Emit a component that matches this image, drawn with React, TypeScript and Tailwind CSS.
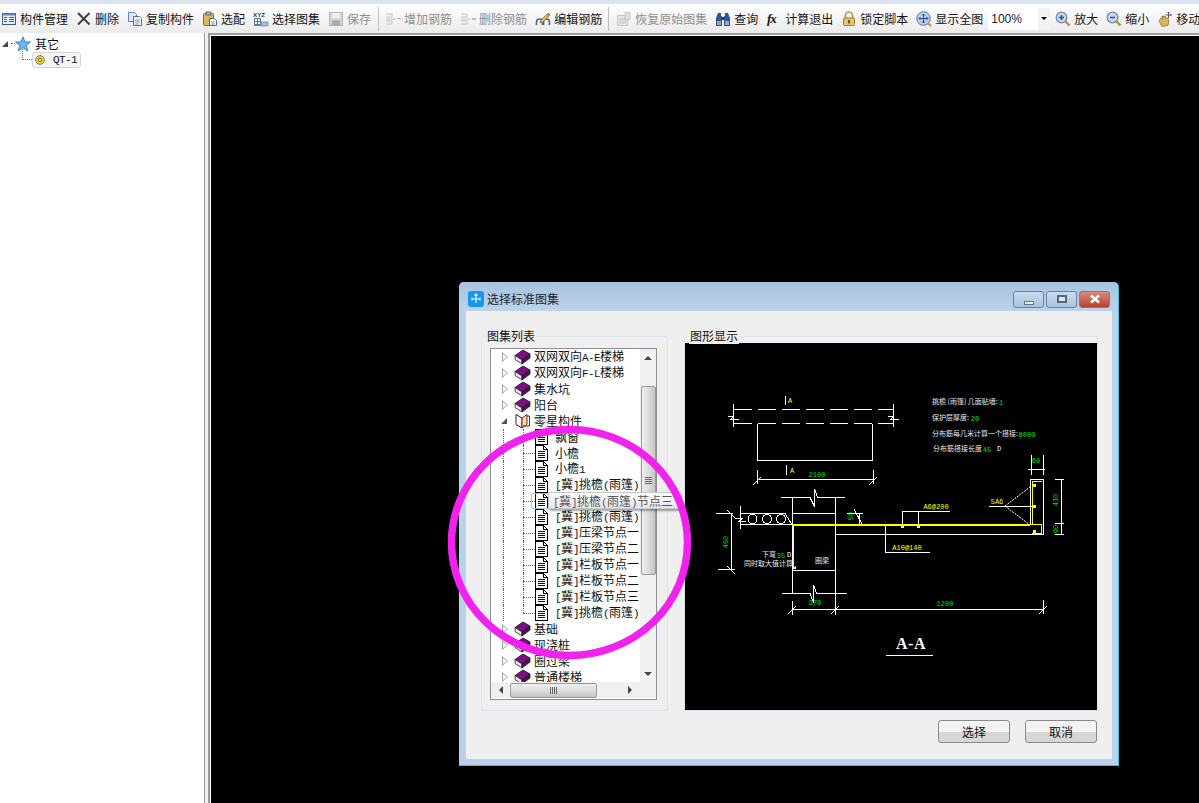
import React from "react";

const CJK = "font-['Noto_Sans_CJK_SC','Noto_Sans_CJK_JP',sans-serif]";

function Zh({ t }: { t: string }) {
  const parts = t.split(/([\x00-\x7f]+)/).filter(Boolean);
  return (
    <>
      {parts.map((p, i) =>
        /^[\x00-\x7f]/.test(p) ? (
          <span key={i} className="font-['Liberation_Mono',monospace] text-[11px] tracking-[-0.6px] whitespace-pre">
            {p}
          </span>
        ) : (
          <span key={i}>{p}</span>
        )
      )}
    </>
  );
}

const S = ({ children, cls = "" }: { children: React.ReactNode; cls?: string }) => (
  <svg viewBox="0 0 16 16" className={"w-4 h-4 shrink-0 " + cls}>
    {children}
  </svg>
);

const icons: Record<string, React.ReactNode> = {
  manage: (
    <S>
      <rect x="1.5" y="2.5" width="13" height="11" fill="#e6eef8" stroke="#3a5f95" />
      <rect x="1.5" y="2.5" width="13" height="2" fill="#5f86bd" />
      <rect x="3" y="6" width="3" height="1" fill="#3a5f95" />
      <rect x="3" y="8" width="3" height="1" fill="#3a5f95" />
      <rect x="3" y="10" width="3" height="1" fill="#3a5f95" />
      <rect x="8" y="6" width="5" height="1" fill="#3a5f95" />
      <rect x="8" y="8" width="5" height="1" fill="#3a5f95" />
      <rect x="8" y="10" width="5" height="1" fill="#3a5f95" />
    </S>
  ),
  del: (
    <S>
      <path d="M2 2 L13.500 13.500 M13.500 2 L2 13.500" stroke="#3c3c3c" strokeWidth="1.900" />
    </S>
  ),
  copy: (
    <S>
      <path d="M1.5 1.5h6l2 2v7h-8z" fill="#dce8f6" stroke="#5d83b8" />
      <path d="M6.5 5.5h6l2 2v7h-8z" fill="#fff" stroke="#4b74ad" />
      <path d="M8 9h5M8 11h5M8 13h4" stroke="#6b90c2" />
    </S>
  ),
  paste: (
    <S>
      <rect x="1.5" y="2.5" width="10" height="12" rx="1" fill="#dcb75c" stroke="#8d6a22" />
      <rect x="4" y="1" width="5" height="3" fill="#b5b5b5" stroke="#6d6d6d" />
      <path d="M7.5 7.5h5l2 2v5h-7z" fill="#fff" stroke="#4f6c96" />
      <path d="M9 11h4M9 13h4" stroke="#7c93b5" />
    </S>
  ),
  xyz: (
    <S>
      <text x="0" y="5.5" fontSize="6.200" fontWeight="700" fontFamily="Liberation Sans" fill="#27364f">
        XYZ
      </text>
      <rect x="1" y="7" width="7" height="8" fill="#5d7bab" />
      <rect x="2" y="8" width="2" height="2" fill="#fff" />
      <rect x="5" y="8" width="2" height="2" fill="#fff" />
      <rect x="2" y="11" width="2" height="2" fill="#fff" />
      <rect x="5" y="11" width="2" height="2" fill="#fff" />
      <rect x="8" y="11" width="7" height="4" fill="#a8bbd6" stroke="#5d7bab" strokeWidth=".6" />
    </S>
  ),
  save: (
    <S>
      <rect x="1.5" y="1.5" width="13" height="13" fill="#d4d4d4" stroke="#b4b4b4" />
      <rect x="4" y="2" width="8" height="5" fill="#efefef" />
      <rect x="4" y="9.5" width="8" height="5" fill="#a9a9a9" />
    </S>
  ),
  add: (
    <S>
      <path d="M1 3h6v3H1M1 13h6v-3H1M1 8h10" stroke="#c4c4c4" fill="none" />
      <path d="M12 7.500h4" stroke="#a9a9a9" />
    </S>
  ),
  rem: (
    <S>
      <path d="M1 3h6v3H1M1 13h6v-3H1M1 8h10" stroke="#c4c4c4" fill="none" />
      <path d="M12 8h4" stroke="#a9a9a9" strokeWidth="1.400" />
    </S>
  ),
  edit: (
    <S>
      <path d="M1.5 14v-3a3 3 0 0 1 6 0v3M8.5 14v-3a3 3 0 0 1 6 0v3" stroke="#3c66a8" strokeWidth="1.600" fill="none" />
      <path d="M6 9 13 2l2 2-7 7-3 1z" fill="#e5b04c" stroke="#8c6720" strokeWidth=".7" />
      <path d="M13 2l2 2-1 1-2-2z" fill="#d2665a" />
    </S>
  ),
  restore: (
    <S>
      <rect x="1.5" y="4.5" width="10" height="10" fill="#e6e6e6" stroke="#c6c6c6" />
      <path d="M9 1.5h5v7H9z" fill="#dedede" stroke="#c9c9c9" />
      <path d="M3 8h7M3 10h7M3 12h7" stroke="#c6c6c6" />
    </S>
  ),
  find: (
    <S>
      <path d="M3 2h3v3h1v10H1V7z" fill="#33568f" />
      <path d="M13 2h-3v3H9v10h6V7z" fill="#33568f" />
      <rect x="2" y="10" width="4" height="4" fill="#8aa7d3" />
      <rect x="10" y="10" width="4" height="4" fill="#8aa7d3" />
      <rect x="7" y="6" width="2" height="3" fill="#1f3558" />
    </S>
  ),
  fx: (
    <S>
      <text x="1" y="12" fontSize="13" fontStyle="italic" fontWeight="700" fontFamily="Liberation Serif" fill="#111" letterSpacing="-1">
        fx
      </text>
    </S>
  ),
  lock: (
    <S>
      <path d="M4.5 7V4.500a3.500 3.500 0 0 1 7 0V7" stroke="#b9954d" strokeWidth="1.600" fill="none" />
      <rect x="2.5" y="7" width="11" height="7.500" rx="1" fill="#e9c46e" stroke="#a17a2c" />
      <rect x="7" y="9" width="2" height="3.500" fill="#7d5a15" />
    </S>
  ),
  fit: (
    <S>
      <circle cx="7.5" cy="7.5" r="6.800" fill="#b9cfea" stroke="#567aa9" />
      <path d="M7.500 3v9M3 7.500h9M6 4.500l1.500-1.500L9 4.500M6 10.500 7.500 12 9 10.500M4.500 6 3 7.500 4.500 9M10.500 6 12 7.500 10.500 9" stroke="#2e4f80" fill="none" />
      <path d="M12.500 12.500l2.500 2.500" stroke="#c98d2b" strokeWidth="2" />
    </S>
  ),
  zin: (
    <S>
      <circle cx="6.500" cy="6.500" r="5.300" fill="#c5d8ee" stroke="#6d89ad" strokeWidth="1.300" />
      <path d="M4 6.500h5M6.500 4v5" stroke="#2c5288" strokeWidth="1.500" />
      <path d="M10.500 10.500l4 4" stroke="#b98d3d" strokeWidth="2.400" />
    </S>
  ),
  zout: (
    <S>
      <circle cx="6.500" cy="6.500" r="5.300" fill="#c5d8ee" stroke="#6d89ad" strokeWidth="1.300" />
      <path d="M4 6.500h5" stroke="#2c5288" strokeWidth="1.500" />
      <path d="M10.500 10.500l4 4" stroke="#b98d3d" strokeWidth="2.400" />
    </S>
  ),
  move: (
    <S>
      <path d="M2 10 4 7l1 1V5l1.500 2V4.500L8 7V5l1.500 2.500L11 7l1 3-1 4.500-6 1z" fill="#dcb25c" stroke="#8f6f30" strokeWidth=".7" />
      <path d="M11.500 1v6M8.500 4h6M10.500 2 11.500 1l1 1M13.500 3l1 1-1 1" stroke="#3e4c5e" fill="none" strokeWidth=".9" />
    </S>
  ),
};

const tools: (
  | { i: string; t: string; off?: boolean }
  | { sep: string }
  | { combo: true }
)[] = [
  { i: "manage", t: "构件管理" },
  { i: "del", t: "删除" },
  { i: "copy", t: "复制构件" },
  { i: "paste", t: "选配" },
  { i: "xyz", t: "选择图集" },
  { i: "save", t: "保存", off: true },
  { sep: "-ml-px -mr-[2px]" },
  { i: "add", t: "增加钢筋", off: true },
  { i: "rem", t: "删除钢筋", off: true },
  { i: "edit", t: "编辑钢筋" },
  { sep: "-ml-[2px] -mr-px" },
  { i: "restore", t: "恢复原始图集", off: true },
  { i: "find", t: "查询" },
  { i: "fx", t: "计算退出" },
  { i: "lock", t: "锁定脚本" },
  { i: "fit", t: "显示全图" },
  { combo: true },
  { i: "zin", t: "放大" },
  { i: "zout", t: "缩小" },
  { i: "move", t: "移动" },
];

function Toolbar() {
  return (
    <div className="h-[29px] flex items-center gap-2 pl-px whitespace-nowrap overflow-hidden bg-gradient-to-b from-[#ffffff] to-[#ebebeb]">
      {tools.map((x, k) => {
        if ("sep" in x) return <div key={k} className={"w-px h-6 bg-[#c0c0c0] shrink-0 " + x.sep} />;
        if ("combo" in x)
          return (
            <div key={k} className="-mx-[3px] w-[62px] h-[22px] bg-white flex items-center shrink-0">
              <span className="ml-[3px] flex-1 text-[12px] text-[#222] font-['Liberation_Sans',sans-serif]">100%</span>
              <span className="w-[12px] h-full bg-[#f2f2f2] flex items-center justify-center">
                <span className="w-0 h-0 border-x-[3px] border-x-transparent border-t-[3px] border-t-black" />
              </span>
            </div>
          );
        return (
          <div key={k} className="flex items-center gap-[3px] shrink-0">
            {icons[x.i]}
            <span className={"text-[12px] leading-4 " + (x.off ? "text-[#8f8f8f]" : "text-[#151515]")}>{x.t}</span>
          </div>
        );
      })}
    </div>
  );
}

function LeftTree() {
  return (
    <div className="w-[204px] shrink-0 bg-white relative border-r border-[#9a9a9a] box-content">
      <div className="h-[17px] mt-[2px] flex items-center">
        <span className="ml-[2px] w-0 h-0 border-l-[6px] border-l-transparent border-b-[6px] border-b-[#444]" />
        <span className="ml-[3px] w-[4px] border-t border-dotted border-[#777]" />
        <svg viewBox="0 0 16 16" className="w-4 h-4">
          <path d="M8 .8 10 6h5.500l-4.400 3.400L12.800 15 8 11.700 3.200 15l1.700-5.600L.5 6H6z" fill="#6fb7ee" stroke="#2b7fc6" strokeWidth=".9" />
        </svg>
        <span className="ml-[4px] text-[12px] text-[#111]">其它</span>
      </div>
      <div className="h-4 flex items-center relative">
        <span className="absolute left-[22px] -top-[3px] h-[11px] w-[10px] border-l border-b border-dotted border-[#777]" />
        <div className="ml-[32px] w-[49px] h-4 border border-[#d4d4d4] rounded-[3px] bg-[#f5f5f5] flex items-center">
          <svg viewBox="0 0 12 12" className="ml-[1px] w-3 h-3">
            <circle cx="6" cy="6" r="4.300" fill="#f0e020" stroke="#333" strokeWidth="1" strokeDasharray="1.300 .7" />
            <circle cx="6" cy="6" r="1.600" fill="#fff" stroke="#333" strokeWidth=".8" />
          </svg>
          <span className="ml-[7px] text-[11px] tracking-[-0.6px] font-['Liberation_Mono',monospace] text-[#111]">QT-1</span>
        </div>
      </div>
    </div>
  );
}

const Book = () => (
  <svg viewBox="0 0 17 16" className="w-[17px] h-4 shrink-0">
    <path d="M1 6.500 9 1l7 4-8 6z" fill="#7d0f80" stroke="#2a0530" strokeWidth=".8" />
    <path d="M1 6.500 8 11v4L1 10.500z" fill="#e8e8e8" stroke="#222" strokeWidth=".8" />
    <path d="M8 11l8-6v4l-8 6z" fill="#4b1050" stroke="#222" strokeWidth=".8" />
  </svg>
);
const OpenBook = () => (
  <svg viewBox="0 0 17 16" className="w-[17px] h-4 shrink-0">
    <path d="M2 1.500 8 5v10l-6-3.500z" fill="#fff" stroke="#3a1050" />
    <path d="M8 5l5-3.500v10L8 15z" fill="#f2e46c" stroke="#6a2080" />
    <path d="M13 3h2.500v10H9" fill="none" stroke="#7d0f80" />
  </svg>
);
const Doc = () => (
  <svg viewBox="0 0 13 16" className="w-[13px] h-4 shrink-0" shapeRendering="crispEdges">
    <path d="M.5 .5h8l4 4v11H.5z" fill="#fff" stroke="#000" />
    <path d="M8.500 .5v4h4" fill="none" stroke="#000" />
    <path d="M3 6.500h7M3 8.500h7M3 10.500h7M3 12.500h7" stroke="#00008b" />
  </svg>
);

const Tri = () => (
  <span className="relative w-[6px] h-[10px] shrink-0 ml-[11px] flex items-center">
    <span className="w-0 h-0 border-y-[5px] border-y-transparent border-l-[6px] border-l-[#a0a0a0]" />
    <span className="absolute left-px top-[2px] w-0 h-0 border-y-[3px] border-y-transparent border-l-[4px] border-l-white" />
  </span>
);

function L1({ t }: { t: string }) {
  return (
    <div className="h-4 flex items-center shrink-0">
      <Tri />
      <span className="ml-[6px] flex shrink-0">
        <Book />
      </span>
      <span className="ml-[3px] text-[12px] leading-4 text-[#111] whitespace-nowrap">
        <Zh t={t} />
      </span>
    </div>
  );
}

function L2({ t, sel, last }: { t: string; sel?: boolean; last?: boolean }) {
  return (
    <div className="h-4 flex items-center shrink-0 relative">
      <span className="absolute left-[12px] top-0 h-4 border-l border-dotted border-[#666]" />
      <span className={"absolute left-[32px] top-0 border-l border-dotted border-[#666] " + (last ? "h-2" : "h-4")} />
      <span className="ml-[32px] w-[12px] shrink-0 border-t border-dotted border-[#666]" />
      <Doc />
      {!sel && (
        <span className="ml-[7px] text-[12px] leading-4 text-[#111] whitespace-nowrap">
          <Zh t={t} />
        </span>
      )}
      {sel && <span className="absolute left-[40px] top-0 w-[18px] h-4 border border-[#9cc3e8] rounded-[2px]" />}
    </div>
  );
}

function TreeList() {
  const top = ["双网双向A-E楼梯", "双网双向F-L楼梯", "集水坑", "阳台"];
  const kids = [
    "飘窗",
    "小檐",
    "小檐1",
    "[冀]挑檐(雨篷)",
    "[冀]挑檐(雨篷)节点三",
    "[冀]挑檐(雨篷)",
    "[冀]压梁节点一",
    "[冀]压梁节点二",
    "[冀]栏板节点一",
    "[冀]栏板节点二",
    "[冀]栏板节点三",
    "[冀]挑檐(雨篷)",
  ];
  const rest = ["基础", "现浇桩", "圈过梁", "普通楼梯"];
  return (
    <div className="flex-1 min-w-0 h-[333px] overflow-hidden flex flex-col">
      {top.map((t) => (
        <L1 key={t} t={t} />
      ))}
      <div className="h-4 flex items-center shrink-0">
        <span className="ml-[10px] w-0 h-0 border-l-[6px] border-l-transparent border-b-[6px] border-b-[#555]" />
        <span className="ml-[7px] flex">
          <OpenBook />
        </span>
        <span className="ml-[3px] text-[12px] leading-4 text-[#111]">零星构件</span>
      </div>
      {kids.map((t, i) => (
        <L2 key={i} t={t} sel={i === 4} last={i === kids.length - 1} />
      ))}
      {rest.map((t) => (
        <L1 key={t} t={t} />
      ))}
    </div>
  );
}

function VScroll() {
  return (
    <div className="w-[16px] h-[333px] bg-[#f0f0f0] flex flex-col items-center shrink-0">
      <div className="h-[18px] flex items-center justify-center">
        <span className="w-0 h-0 border-x-[4px] border-x-transparent border-b-[4px] border-b-[#444]" />
      </div>
      <div className="h-[19px] shrink-0" />
      <div className="w-[15px] h-[189px] border border-[#9a9a9a] rounded-[2px] bg-gradient-to-r from-[#eeeeee] via-[#dddddd] to-[#c4c4c4] flex flex-col items-center justify-center gap-px">
        <span className="w-[7px] h-px bg-[#666]" />
        <span className="w-[7px] h-px bg-[#666]" />
        <span className="w-[7px] h-px bg-[#666]" />
        <span className="w-[7px] h-px bg-[#666]" />
      </div>
      <div className="flex-1" />
      <div className="h-[16px] flex items-center justify-center">
        <span className="w-0 h-0 border-x-[4px] border-x-transparent border-t-[4px] border-t-[#444]" />
      </div>
    </div>
  );
}

function HScroll() {
  return (
    <div className="h-[16px] bg-[#f0f0f0] flex items-center">
      <div className="w-[19px] flex items-center justify-center">
        <span className="w-0 h-0 border-y-[4px] border-y-transparent border-r-[4px] border-r-[#444]" />
      </div>
      <div className="w-[87px] h-[15px] border border-[#9a9a9a] rounded-[2px] bg-gradient-to-b from-[#eeeeee] via-[#dddddd] to-[#c4c4c4] flex items-center justify-center gap-px">
        <span className="w-px h-[7px] bg-[#666]" />
        <span className="w-px h-[7px] bg-[#666]" />
        <span className="w-px h-[7px] bg-[#666]" />
        <span className="w-px h-[7px] bg-[#666]" />
      </div>
      <div className="flex-1" />
      <div className="w-[16px] flex items-center justify-center">
        <span className="w-0 h-0 border-y-[4px] border-y-transparent border-l-[4px] border-l-[#444]" />
      </div>
      <div className="w-[18px]" />
    </div>
  );
}

const W = "#ffffff";
const Y = "#ffff00";
const G = "#00e000";

function Drawing() {
  const dash = [733, 757, 781, 805, 829, 853, 877];
  const tx = "Noto Sans CJK SC";
  const small = (x: number, y: number, s: string, c = "#e8e8f0") => (
    <text x={x} y={y} fontSize="7" fill={c} fontFamily={tx}>
      {s}
    </text>
  );
  const num = (x: number, y: number, s: string, c = G, rot?: boolean) => (
    <text
      x={x}
      y={y}
      fontSize="7"
      fill={c}
      fontFamily="Liberation Mono"
      textAnchor="middle"
      transform={rot ? `rotate(-90 ${x} ${y})` : undefined}
    >
      {s}
    </text>
  );
  const slash = (x: number, y: number) => <path d={`M${x - 4} ${y + 4}L${x + 4} ${y - 4}`} />;
  const back = (x: number, y: number) => <path d={`M${x - 4} ${y - 4}L${x + 4} ${y + 4}`} />;
  return (
    <svg viewBox="685 343 412 367" className="w-[412px] h-[367px] block">
      <g stroke={W} fill="none" strokeWidth="1" shapeRendering="crispEdges">
        {dash.map((x) => (
          <path key={x} d={`M${x + 0.5} 409.500h${x === 877 ? 16 : 18}M${x + 0.5} 423.500h${x === 877 ? 16 : 18}`} />
        ))}
        <path d="M733.500 404v23M893.500 404v23M785.500 396v9M786.500 465v10" />
        <path d="M728 416h6l-3 3h8M888 416h6l-3 3h8" />
        <path d="M757.500 423.500V460.500H872.500V423.500" />
        <path d="M757.500 470v14M873.500 470v14M757 479.500h116" />
        {slash(757, 481)}
        {slash(873, 481)}
        <path d="M781 497.500h29l4.500 9V489l3 8.500h27.500M792.500 497v96M835.500 497v113M782 593.500h28l3.500 9V585l3 8.500h30" />
        <path d="M792 513.500h43M792 570.500h43" />
        <path d="M741 513.500h44l7 11M740.500 506v23M741 524.500h51" />
        <circle cx="752.500" cy="519" r="4.500" />
        <circle cx="767" cy="519" r="4.500" />
        <circle cx="781" cy="519" r="4.500" />
        <path d="M735 518.500h7l-3 3h7" />
        <path d="M731.500 513v56M716 513.500h17M718 569.500h17" />
        {back(731, 514)}
        {back(731, 570)}
        <path d="M847 513.500h16M859.500 513v11M854 509l9 17" />
        <path d="M835 534.500h208.500M885.500 524v28M885 552.500h45M902.500 511.500v13M918.500 511.500v13M902 511.500h48" />
        <path d="M989 506.500h45M1030.500 479.500v45M1030 479.500h13.500v55" />
        <path d="M1005 506 1030 487M1005 506 1030 525" strokeDasharray="2 1" shapeRendering="auto" />
        <path d="M1031.500 455v20M1043.500 455v20M1028 469.500h17" />
        <path d="M1061.500 479v56M1055 479.500h9M1055 523.500h9M1055 534.500h9" />
        <path d="M792.500 601v14M835.500 601v14M1043.500 600v14M792 609.500h251" />
        {slash(792, 610)}
        {slash(835, 610)}
        {slash(1043, 610)}
        <path d="M886 655.500h47" />
      </g>
      <g stroke={Y} fill="none" shapeRendering="crispEdges">
        <path d="M792 524.500h238" strokeWidth="2" />
        <path d="M793.500 524v44" strokeWidth="1.500" />
        <path d="M792.500 568h3v-2" strokeWidth="1.500" />
        <path d="M1032.500 524V481" strokeWidth="1.500" />
        <path d="M1032 481.500h10M1030 524.500h11v8.500h-9" />
        <path d="M902 525v3M918 525v3M1034 505v3M1034 484v3M1034 530v3" strokeWidth="3" />
      </g>
      {small(932, 404, "挑檐 (雨篷) 几面贴墙:")}
      {num(1001, 405, "1")}
      {small(932, 420, "保护层厚度:")}
      {num(975, 421, "20")}
      {small(932, 436, "分布筋每几米计算一个搭接:")}
      {num(1027, 437, "8000")}
      {small(933, 451, "分布筋搭接长度")}
      {num(987, 452, "45")}
      {num(999, 451, "D", "#ffffff")}
      {small(762, 557, "下弯")}
      {num(781, 558, "35")}
      {num(789, 557, "D", "#ffffff")}
      {small(744, 566, "同时取大值计算")}
      {small(815, 563, "圈梁")}
      {num(790, 403, "A", Y)}
      {num(792, 473, "A", Y)}
      {num(817, 477, "2100")}
      {num(853, 516, "50", G, true)}
      {num(728, 542, "450", G, true)}
      {num(815, 605, "370")}
      {num(945, 606, "1200")}
      {num(936, 509, "A6@200", Y)}
      {num(907, 550, "A10@140", Y)}
      {num(997, 504, "5A6", Y)}
      {num(1036, 463, "60")}
      {num(1058, 500, "410", G, true)}
      {num(1058, 529, "90", G, true)}
      <text x="911" y="649" fontSize="16" fontWeight="700" fill="#fff" textAnchor="middle" letterSpacing=".5" fontFamily="Liberation Serif">
        A-A
      </text>
    </svg>
  );
}

function Group({ label, w, children }: { label: string; w: string; children: React.ReactNode }) {
  return (
    <div className={"relative h-[375px] border border-[#dce4ee] rounded-[2px] " + w}>
      <span className="absolute left-[4px] -top-[9px] bg-[#efefef] px-px text-[12px] leading-4 text-[#111]">{label}</span>
      {children}
    </div>
  );
}

function WinBtn({ w, cls, children }: { w: string; cls: string; children: React.ReactNode }) {
  return (
    <div className={"h-[17px] rounded-[3px] border border-[#6f8198] flex items-center justify-center " + w + " " + cls}>{children}</div>
  );
}

function Dialog() {
  return (
    <div className="absolute left-[459px] top-[282px] w-[660px] h-[484px] bg-[#b9d1ea] border-r border-b border-[#38c5e0] rounded-t-[5px] flex flex-col">
      <div className="h-[29px] shrink-0 rounded-t-[5px] bg-gradient-to-b from-[#a8c2de] to-[#bcd3ea] flex items-center pt-[5px]">
        <div className="ml-[9px] w-4 h-4 rounded-[3px] bg-[#1596f0] flex items-center justify-center">
          <svg viewBox="0 0 12 12" className="w-3 h-3">
            <path d="M6 1v9M2 6h8M4.500 2.500 6 1l1.500 1.500M2 4.500v3M10 4.500v3" stroke="#fff" fill="none" strokeWidth="1.100" />
          </svg>
        </div>
        <span className="ml-[3px] text-[12px] text-[#1c2430]">选择标准图集</span>
        <div className="ml-auto mr-[8px] flex gap-[2px]">
          <WinBtn w="w-[31px]" cls="bg-gradient-to-b from-[#c9dcef] to-[#a9c3df] items-end pb-[2px]">
            <span className="w-[10px] h-[4px] bg-[#eef2f6] border border-[#6a7688]" />
          </WinBtn>
          <WinBtn w="w-[31px]" cls="bg-gradient-to-b from-[#c9dcef] to-[#a9c3df]">
            <span className="w-[10px] h-[8px] bg-[#dfe6ee] border-2 border-[#5a687c]" />
          </WinBtn>
          <WinBtn w="w-[31px]" cls="bg-gradient-to-b from-[#d98a7a] to-[#b8402c] border-[#5a2a2a]">
            <svg viewBox="0 0 12 10" className="w-3 h-[10px]">
              <path d="M2 1.500 10 8.500M10 1.500 2 8.500" stroke="#fff" strokeWidth="2.600" />
            </svg>
          </WinBtn>
        </div>
      </div>
      <div className="ml-[7px] mr-[6px] h-[448px] bg-[#efefef] relative pt-[25px] pl-[15px]">
        <div className="flex gap-[16px]">
          <Group label="图集列表" w="w-[187px]">
            <div className="ml-[8px] mt-[11px] w-[167px] h-[352px] border border-[#8a8f96] bg-white flex flex-col">
              <div className="flex h-[333px]">
                <TreeList />
                <VScroll />
              </div>
              <HScroll />
            </div>
          </Group>
          <Group label="图形显示" w="w-[414px]">
            <div className="mt-[6px] h-[367px] bg-black">
              <Drawing />
            </div>
          </Group>
        </div>
        <div className="mt-[9px] mr-[15px] flex justify-end gap-[15px]">
          {["选择", "取消"].map((t) => (
            <div
              key={t}
              className="w-[72px] h-[23px] rounded-[3px] border border-[#8a8a8a] bg-gradient-to-b from-[#f3f3f3] from-50% to-[#d6d6d6] to-50% flex items-center justify-center text-[12px] text-[#111]"
            >
              {t}
            </div>
          ))}
        </div>
      </div>
    </div>
  );
}

function Tooltip() {
  return (
    <div className="absolute left-[548px] top-[492px] w-[133px] h-[17px] pl-[4px] bg-gradient-to-b from-[#ffffff] to-[#e4e5f0] border border-[#c8c8c8] rounded-[2px] shadow-[1px_2px_2px_rgba(0,0,0,0.35)] text-[12px] leading-[15px] text-[#575757] whitespace-nowrap">
      <Zh t="[冀]挑檐(雨篷)节点三" />
    </div>
  );
}

export default function App() {
  return (
    <div className={"relative w-[1199px] h-[803px] overflow-hidden bg-[#efefef] flex flex-col " + CJK}>
      <div className="h-[4px] bg-[#dbe5f1] shrink-0" />
      <Toolbar />
      <div className="flex-1 flex min-h-0">
        <LeftTree />
        <div className="w-[3px] bg-[#f0f0f0] shrink-0" />
        <div className="flex-1 border-l-2 border-[#9a9a9a] flex flex-col pl-px bg-white">
          <div className="h-[3px] -ml-[1px] border-t-2 border-[#a0a0a0] bg-white" />
          <div className="flex-1 bg-black" />
        </div>
      </div>
      <Dialog />
      <Tooltip />
      <svg viewBox="0 0 1199 803" className="absolute left-0 top-0 w-[1199px] h-[803px] pointer-events-none">
        <ellipse cx="569.500" cy="542.500" rx="118" ry="113" fill="none" stroke="#f222ee" strokeWidth="7.500" />
      </svg>
    </div>
  );
}
